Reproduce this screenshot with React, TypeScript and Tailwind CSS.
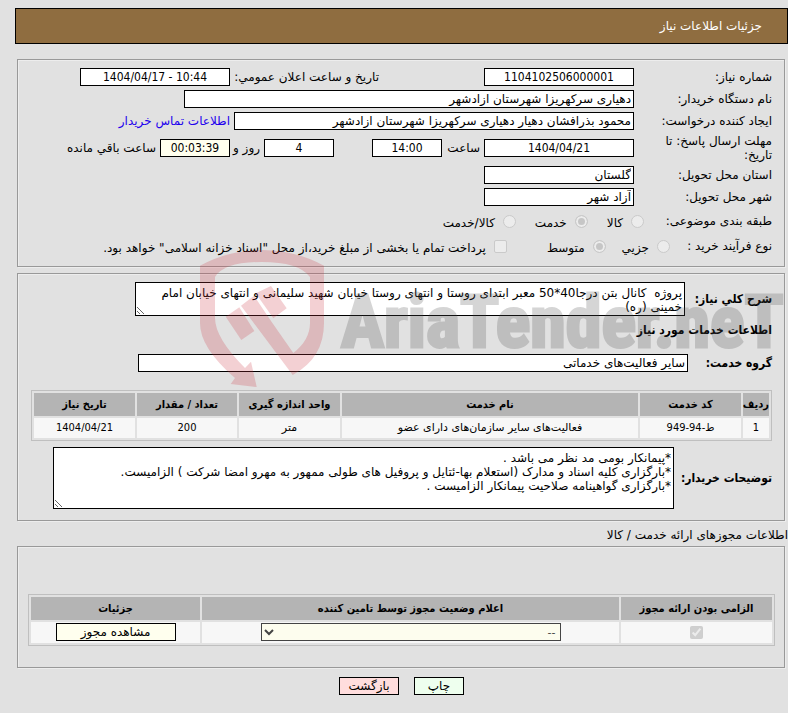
import React from "react";

const box = "h-[18px] min-w-0 border border-black bg-white px-[2px] text-xs leading-4 text-black outline-none";
const num = "text-center font-['DejaVu_Sans_Condensed','DejaVu_Sans',sans-serif]";
const bold = "font-['DejaVu_Sans_Condensed','DejaVu_Sans',sans-serif] text-xs leading-[14px] font-bold whitespace-nowrap";
const frame = "border border-[#999] shadow-[inset_1px_1px_0_#ededed,1px_1px_0_#ededed]";
const th = "h-[23px] bg-[#b4b4b4] p-0 text-center font-['DejaVu_Sans_Condensed','DejaVu_Sans',sans-serif] text-[11px] font-bold whitespace-nowrap";
const td = "bg-[#f7f7f7] p-0 text-center text-[11px]";
const radio = "size-[13px] shrink-0 appearance-none rounded-full border border-[#cacaca] bg-[#ececec] checked:bg-[#c6c6c6] checked:shadow-[inset_0_0_0_2px_#ececec]";

function Row({ id, label, children }: { id: string; label: string; children: React.ReactNode }) {
  return (
    <div className="flex h-[22px] items-center">
      <label htmlFor={id} className="w-[138px] shrink-0">{label}</label>
      {children}
    </div>
  );
}

function Choice({ name, label, checked }: { name: string; label: string; checked?: boolean }) {
  return (
    <label className="flex items-center gap-2">
      <input type="radio" name={name} disabled defaultChecked={checked} className={radio} />
      <span className="mt-1">{label}</span>
    </label>
  );
}

function Watermark() {
  return (
    <div aria-hidden="true" dir="ltr" className="pointer-events-none absolute top-[250px] left-[199px] flex">
      <svg width="126" height="138" viewBox="0 0 126 138" className="shrink-0">
        <g fill="#cc3340" fillOpacity=".23">
          <path d="M1 15.7Q30 0 63 0T125 15.7V73Q125 108 93.7 125L59.3 79L42 55.7L55 45.7L72 71L94.3 103Q111 90 111 73V27Q100 12 62.7 12Q25 12 16 27V68Q16 88 46 118L52 111.7L57.7 137L31.7 134L36 128Q1 98 1 73Z" />
          <path d="M26.7 66.7L40.3 57.3L55.3 81L42.3 90Z" />
          <path d="M56.7 43.3L72 36L87.7 58.3L74.3 68.3Z" />
        </g>
      </svg>
      <span className="ml-4 font-['Liberation_Sans_Narrow','Roboto_Condensed',sans-serif] text-[72px] leading-[146px] font-bold text-[#4e4e4e] opacity-[0.23] [-webkit-text-stroke:3px_#4e4e4e]">AriaTender.neT</span>
    </div>
  );
}

export default function App() {
  return (
    <div dir="rtl" lang="fa" className="relative min-h-screen overflow-hidden bg-[#e1e1e1] pt-2 pb-[18px] font-['DejaVu_Sans',sans-serif] text-xs leading-[14px] text-black">
      <header className="ml-[15px] flex h-9 items-center border border-black bg-[#8f6d40] px-[25px] text-white">
        <h1>جزئیات اطلاعات نیاز</h1>
      </header>

      <section className={`mt-[15px] mr-[3px] ml-[17px] h-[208px] pt-[6px] pr-3 ${frame}`}>
        <div className="flex h-[22px] items-center">
          <label htmlFor="num" className="w-[138px] shrink-0">شماره نیاز:</label>
          <input id="num" readOnly defaultValue="1104102506000001" className={`${box} ${num} w-[150px]`} />
          <label htmlFor="date" className="mr-[105px] w-[149px] shrink-0 whitespace-nowrap">تاریخ و ساعت اعلان عمومي:</label>
          <input id="date" dir="ltr" readOnly defaultValue="1404/04/17 - 10:44" className={`${box} ${num} w-[150px]`} />
        </div>
        <Row id="org" label="نام دستگاه خریدار:">
          <input id="org" readOnly defaultValue="دهیاری سرکهریزا شهرستان ازادشهر" className={`${box} w-[450px]`} />
        </Row>
        <Row id="creator" label="ایجاد کننده درخواست:">
          <input id="creator" readOnly defaultValue="محمود بذرافشان دهیار دهیاری سرکهریزا شهرستان ازادشهر" className={`${box} w-[400px]`} />
          <a href="#contact" className="mr-1 text-[#2200ee]">اطلاعات تماس خریدار</a>
        </Row>
        <div className="flex h-8 items-center">
          <label htmlFor="due" className="w-[138px] shrink-0 pl-6">مهلت ارسال پاسخ: تا تاریخ:</label>
          <input id="due" readOnly defaultValue="1404/04/21" className={`${box} ${num} w-[150px]`} />
          <label htmlFor="hour" className="mr-1 w-[38px] shrink-0">ساعت</label>
          <input id="hour" readOnly defaultValue="14:00" className={`${box} ${num} w-[70px]`} />
          <input id="days" readOnly defaultValue="4" className={`${box} ${num} mr-[38px] w-[70px]`} />
          <label htmlFor="days" className="mr-1 w-[30px] shrink-0 whitespace-nowrap">روز و</label>
          <input id="left" readOnly defaultValue="00:03:39" className={`h-[18px] w-[70px] border border-black bg-[#ffffee] px-[2px] text-xs leading-4 outline-none ${num}`} />
          <label htmlFor="left" className="mr-1">ساعت باقي مانده</label>
        </div>
        <Row id="state" label="استان محل تحویل:">
          <input id="state" readOnly defaultValue="گلستان" className={`${box} w-[150px]`} />
        </Row>
        <Row id="city" label="شهر محل تحویل:">
          <input id="city" readOnly defaultValue="آزاد شهر" className={`${box} w-[150px]`} />
        </Row>
        <div className="flex h-[26px] items-center">
          <span className="w-[128px] shrink-0">طبقه بندی موضوعی:</span>
          <div className="flex gap-[19px]">
            <Choice name="kind" label="کالا" />
            <Choice name="kind" label="خدمت" checked />
            <Choice name="kind" label="کالا/خدمت" />
          </div>
        </div>
        <div className="flex h-6 items-center">
          <span className="w-[102px] shrink-0">نوع فرآیند خرید :</span>
          <div className="flex gap-4">
            <Choice name="process" label="جزیي" />
            <Choice name="process" label="متوسط" checked />
          </div>
          <label className="mr-10 flex items-center gap-2 whitespace-nowrap">
            <input type="checkbox" disabled className="size-[13px] appearance-none rounded-[2px] border border-[#cacaca] bg-[#ececec]" />
            <span className="mt-1">پرداخت تمام یا بخشی از مبلغ خرید،از محل "اسناد خزانه اسلامی" خواهد بود.</span>
          </label>
        </div>
      </section>

      <section className={`mt-[6px] mr-[3px] ml-[17px] h-[248px] pt-2 pr-3 ${frame}`}>
        <div className="flex items-center">
          <label htmlFor="desc" className={`w-[87px] shrink-0 ${bold}`}>شرح کلي نیاز:</label>
          <textarea id="desc" readOnly defaultValue={"پروژه  کانال بتن درجا40*50 معبر ابتدای روستا و انتهای روستا خیابان شهید سلیمانی و انتهای خیابان امام خمینی (ره)"} className="h-[34px] w-[550px] resize overflow-hidden border border-black bg-white px-[2px] pt-[3px] text-xs leading-[14px]" />
        </div>
        <h2 className={`mt-[7px] ${bold}`}>اطلاعات خدمات مورد نیاز</h2>
        <div className="mt-[17px] flex items-center">
          <label htmlFor="group" className={`w-[84px] shrink-0 ${bold}`}>گروه خدمت:</label>
          <input id="group" readOnly defaultValue="سایر فعالیت‌های خدماتی" className={`${box} w-[550px]`} />
        </div>
        <div className="mt-[18px] pl-[13px]">
          <table className="w-full table-fixed border-separate border-spacing-[2px] border border-[#bfbfbf]">
            <thead>
              <tr>
                <th className={`${th} w-[26px]`}>ردیف</th>
                <th className={`${th} w-[101px]`}>کد خدمت</th>
                <th className={th}>نام خدمت</th>
                <th className={`${th} w-[101px]`}>واحد اندازه گیری</th>
                <th className={`${th} w-[100px]`}>تعداد / مقدار</th>
                <th className={`${th} w-[101px]`}>تاریخ نیاز</th>
              </tr>
            </thead>
            <tbody>
              <tr className="h-5">
                <td className={`${td} ${num}`}>1</td>
                <td className={`${td} ${num}`}>ط-94-949</td>
                <td className={td}>فعالیت‌های سایر سازمان‌های دارای عضو</td>
                <td className={td}>متر</td>
                <td className={`${td} ${num}`}>200</td>
                <td className={`${td} ${num}`}>1404/04/21</td>
              </tr>
            </tbody>
          </table>
        </div>
        <div className="mt-[6px] flex items-center">
          <label htmlFor="notes" className={`w-[98px] shrink-0 ${bold}`}>توضیحات خریدار:</label>
          <textarea id="notes" readOnly defaultValue={"*پیمانکار بومی مد نظر می باشد .\n*بارگزاری کلیه اسناد و مدارک (استعلام بها-ئتایل و پروفیل های طولی ممهور به مهرو امضا شرکت ) الزامیست.\n*بارگزاری گواهینامه صلاحیت پیمانکار الزامیست ."} className="h-[62px] w-[621px] resize overflow-hidden border border-black bg-white px-[2px] pt-[3px] text-xs leading-[14px]" />
        </div>
      </section>

      <h2 className="mt-[7px]">اطلاعات مجوزهای ارائه خدمت / کالا</h2>

      <section className={`mt-1 mr-[3px] ml-[17px] h-[122px] pt-[47px] pr-[9px] pl-[10px] ${frame}`}>
        <table className="w-full table-fixed border-separate border-spacing-[2px] border border-[#bfbfbf]">
          <thead>
            <tr>
              <th className={`${th} w-[151px]`}>الزامی بودن ارائه مجوز</th>
              <th className={th}>اعلام وضعیت مجوز توسط تامین کننده</th>
              <th className={`${th} w-[169px]`}>جزئیات</th>
            </tr>
          </thead>
          <tbody>
            <tr className="h-[21px]">
              <td className={td}>
                <span className="flex justify-center"><input type="checkbox" aria-label="الزامی بودن ارائه مجوز" disabled defaultChecked className="size-[13px]" /></span>
              </td>
              <td className={`${td} align-top`}>
                <select aria-label="اعلام وضعیت مجوز توسط تامین کننده" className="mx-auto mt-px block h-[18px] w-[300px] border border-[#444] bg-[#fdfdee] text-[11px] leading-4 text-[#444]"><option>--</option></select>
              </td>
              <td className={`${td} align-top`}>
                <button className="mx-auto mt-px block h-[18px] w-[120px] border border-black bg-[#ffffee] text-xs leading-4">مشاهده مجوز</button>
              </td>
            </tr>
          </tbody>
        </table>
      </section>

      <div className="mt-[9px] flex justify-center gap-[15px] pl-[15px]">
        <button className="h-[18px] w-[50px] border border-black bg-[#eeffee] text-xs leading-4">چاپ</button>
        <button className="h-[18px] w-[60px] border border-black bg-[#ffdddd] text-xs leading-4">بازگشت</button>
      </div>
      <Watermark />
    </div>
  );
}
